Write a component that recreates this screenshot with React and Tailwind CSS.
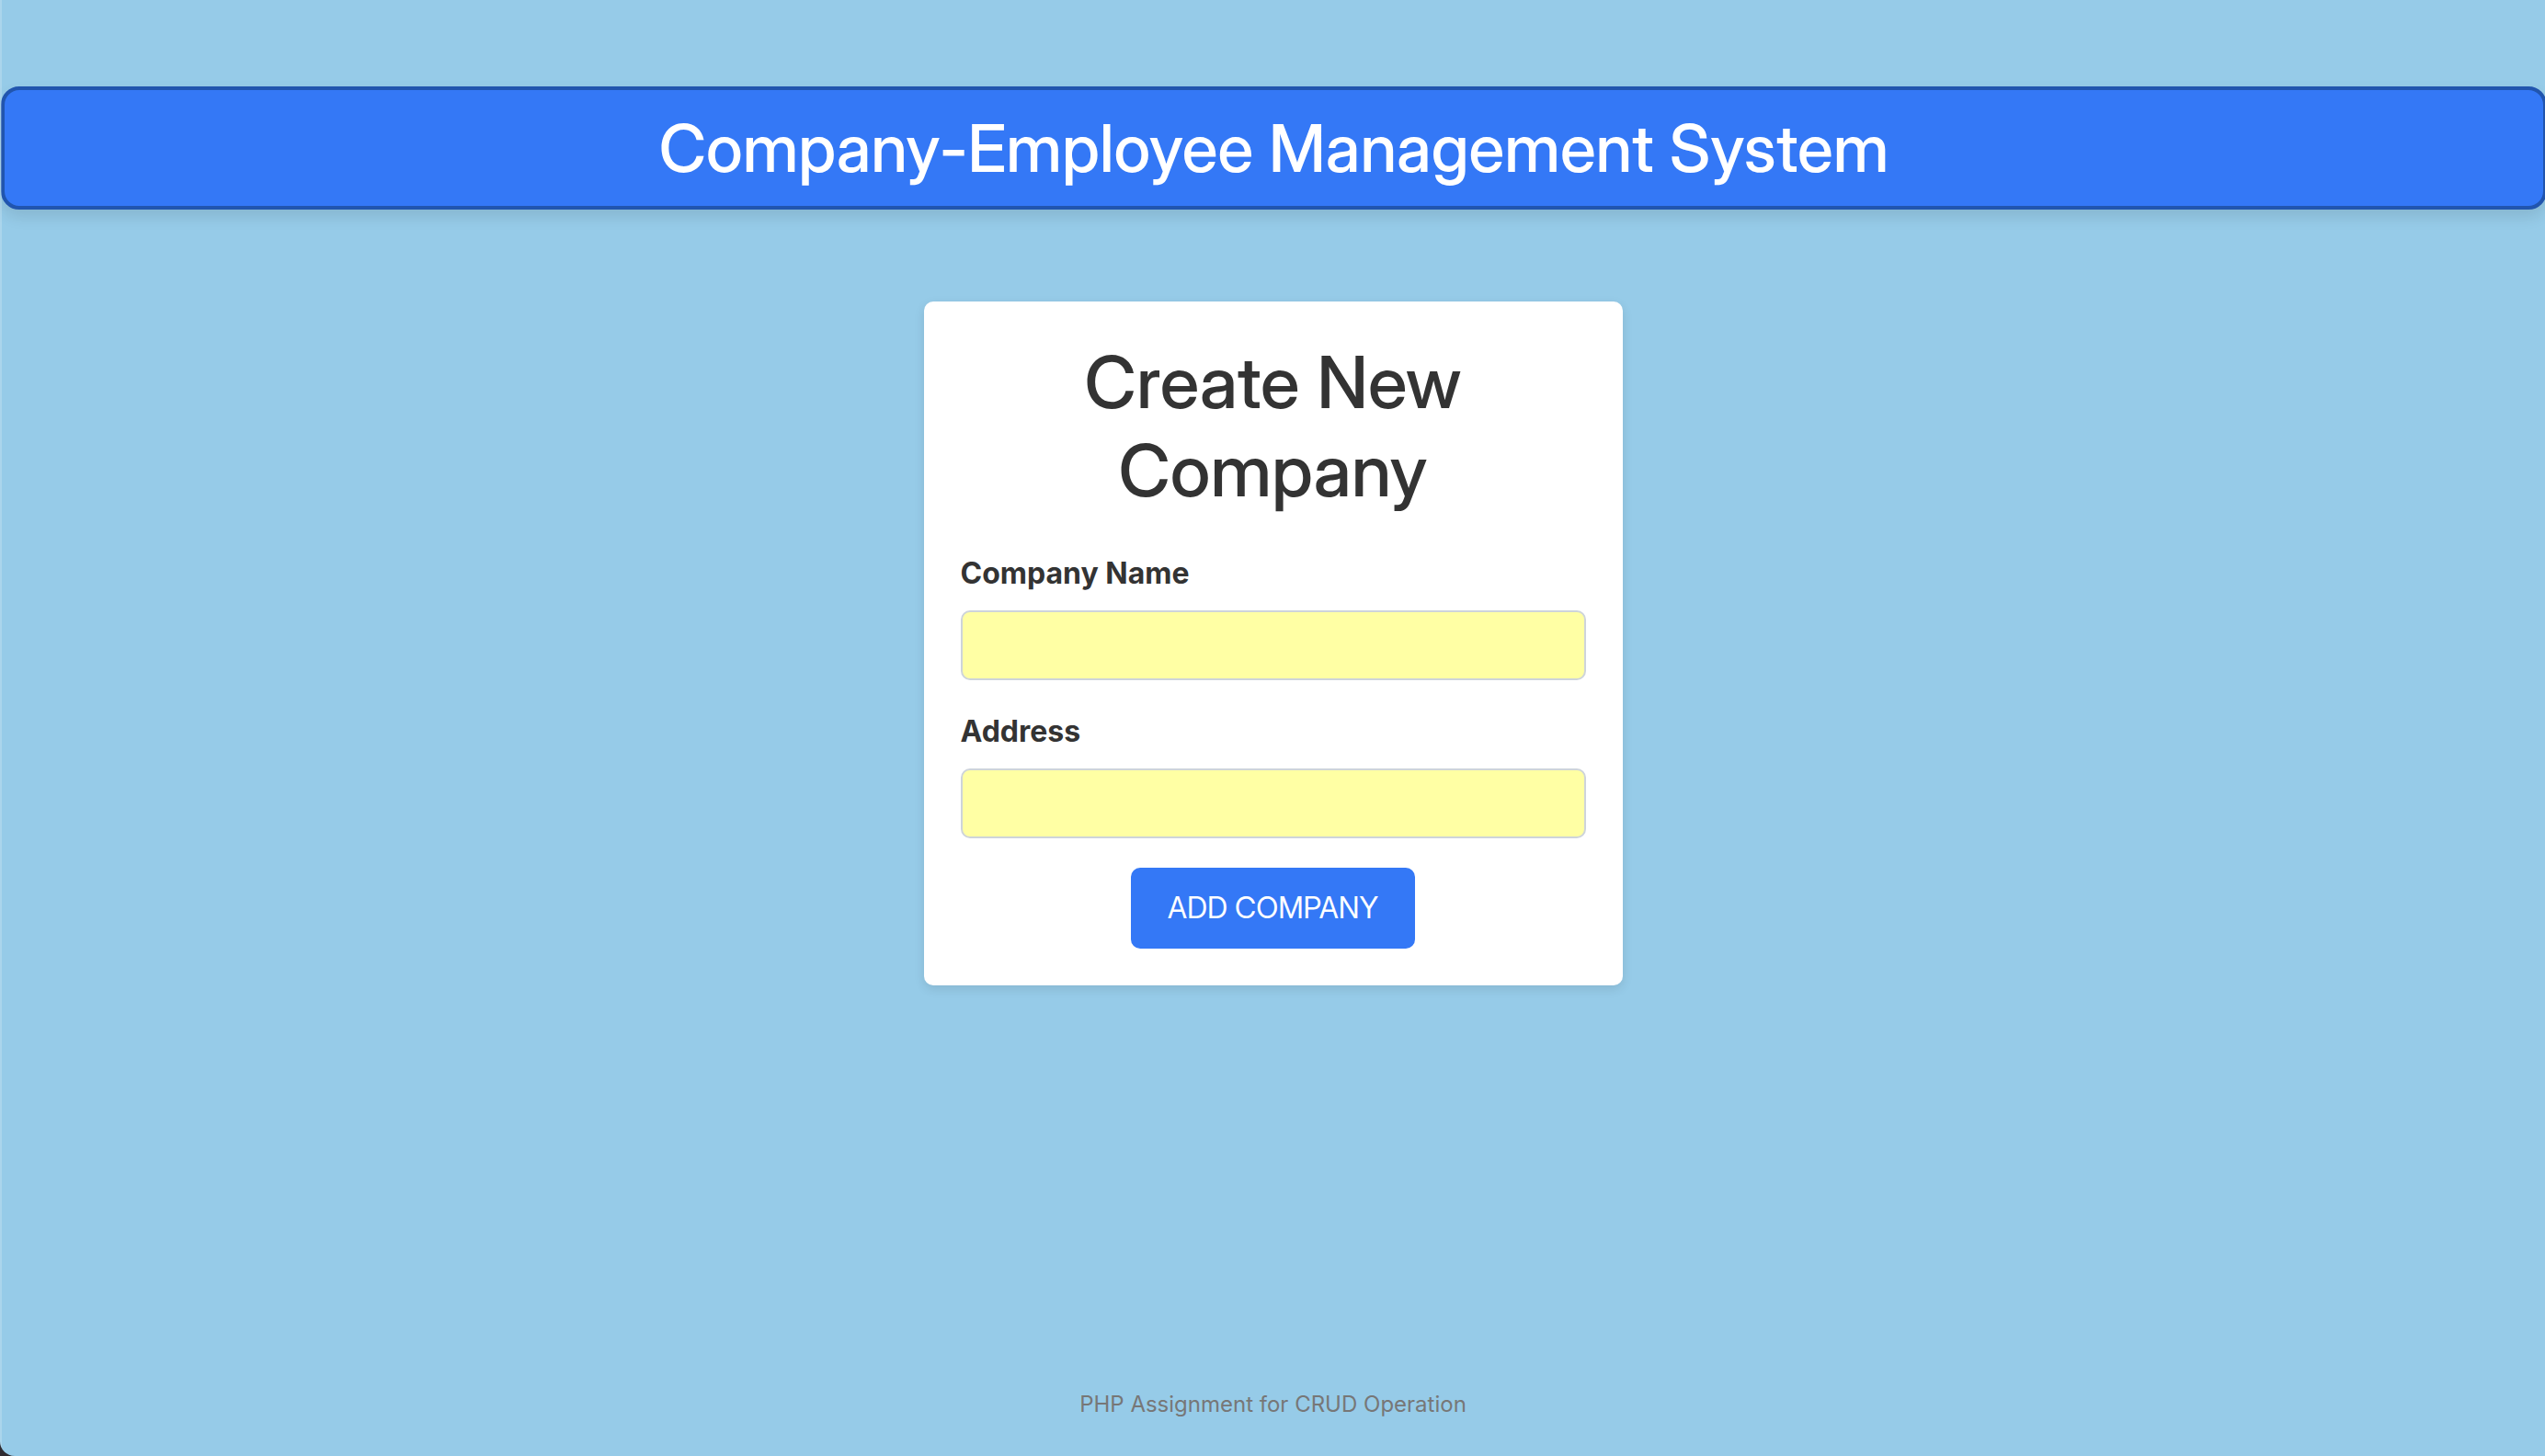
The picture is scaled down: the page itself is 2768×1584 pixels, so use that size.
function Field({ id, label }) {
  return (
    <div className="mb-8">
      <label htmlFor={id} className="mb-4 block text-[32px] leading-[48px] font-bold">
        {label}
      </label>
      <input
        id={id}
        name={id}
        type="text"
        className="block h-[76px] w-full rounded-[10px] border-2 border-[#ced4da] bg-[#ffffa4] px-6 text-[32px] outline-none"
      />
    </div>
  );
}

export default function App() {
  return (
    <div className="min-h-screen bg-[#2e2b31] font-['Inter',sans-serif] text-[#333333]">
      <div className="relative flex min-h-screen flex-col overflow-hidden rounded-bl-[16px] bg-[#96cbe8] pl-px">
        <div className="pointer-events-none absolute inset-y-0 left-0 z-10 w-0.5 bg-white/20" />
        <header className="mt-[94px] -mr-0.5 rounded-[20px] border-4 border-[#2155ae] bg-[#3478f6] py-5 text-center shadow-[0_8px_16px_rgba(0,0,0,0.1)]">
          <h1 className="font-['Inter_Display','Inter',sans-serif] text-[71px] leading-[86px] font-medium text-white">
            Company-Employee Management System
          </h1>
        </header>

        <main className="mt-[100px] flex flex-1 flex-col items-center">
          <form
            className="w-full max-w-[760px] rounded-[10px] bg-white p-10 shadow-[0_4px_12px_rgba(0,0,0,0.1)]"
            onSubmit={(e) => e.preventDefault()}
          >
            <h2 className="mb-10 text-center font-['Inter_Display','Inter',sans-serif] text-[78px] leading-[96px] font-medium">
              Create New Company
            </h2>
            <Field id="company-name" label="Company Name" />
            <Field id="address" label="Address" />
            <button
              type="submit"
              className="mx-auto block h-[88px] rounded-[10px] bg-[#3478f6] px-10 font-['Inter_Display','Inter',sans-serif] text-[32px] leading-[48px] text-white uppercase"
            >
              Add Company
            </button>
          </form>
        </main>

        <footer className="pb-[38px] text-center text-[24px] leading-9 text-[#777777]">
          PHP Assignment for CRUD Operation
        </footer>
      </div>
    </div>
  );
}
